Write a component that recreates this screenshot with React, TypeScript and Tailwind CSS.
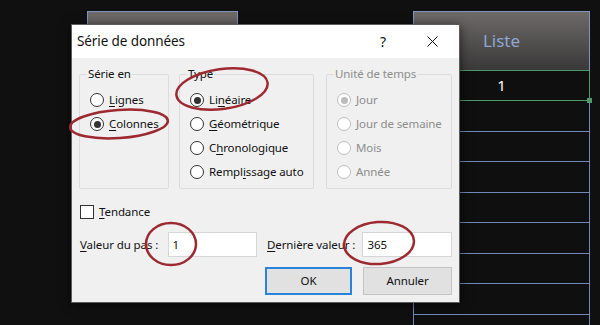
import type { ReactNode } from "react";

const font = { fontFamily: '"Noto Sans", "Open Sans", sans-serif' };

const rowHeights = [31, 30, 31, 30, 31, 30, 31, 31];

function Radio({
  label,
  checked = false,
  disabled = false,
}: {
  label: ReactNode;
  checked?: boolean;
  disabled?: boolean;
}) {
  return (
    <div className="flex h-[24px] items-center gap-[5px]">
      <span
        className={`flex h-[14px] w-[14px] items-center justify-center rounded-full border bg-white ${
          disabled ? "border-[#bcbcbc]" : "border-[#333]"
        }`}
      >
        {checked && (
          <span
            className={`h-[7px] w-[7px] rounded-full ${
              disabled ? "bg-[#bcbcbc]" : "bg-[#333]"
            }`}
          />
        )}
      </span>
      <span className={disabled ? "text-[#8d8d8d]" : "text-[#111]"}>{label}</span>
    </div>
  );
}

function U({ children }: { children: ReactNode }) {
  return <span className="underline decoration-1 underline-offset-2">{children}</span>;
}

function Group({
  title,
  width,
  disabled = false,
  children,
}: {
  title: string;
  width: string;
  disabled?: boolean;
  children: ReactNode;
}) {
  return (
    <fieldset
      className={`h-[123px] ${width} rounded-[2px] border border-[#dcdcdc] pl-[10px]`}
    >
      <legend
        className={`-ml-[3px] px-[1px] leading-[16px] ${
          disabled ? "text-[#8d8d8d]" : "text-[#111]"
        }`}
      >
        {title}
      </legend>
      <div className="pt-[6px]">{children}</div>
    </fieldset>
  );
}

export default function App() {
  return (
    <div
      className="relative h-[325px] w-[600px] overflow-hidden bg-[#101010]"
      style={font}
    >
      {/* sheet behind the dialog */}
      <div className="flex pl-[87px] pt-[11px]">
        <div className="h-[59px] w-[151px] border border-[#8194bd] bg-gradient-to-b from-[#6e6a6a] to-[#3e3c3c]" />
        <div className="ml-[175px] w-[177px]">
          <div className="flex h-[59px] items-center justify-center border border-b-0 border-[#8194bd] bg-gradient-to-b from-[#6e6a6a] to-[#3a3838] text-[17px] text-[#8ea6d2]">
            Liste
          </div>
          <div className="relative flex h-[31px] items-center justify-center border-[1.5px] border-[#4f9a6b] bg-[#0f0f0f] text-[15px] text-white">
            1
            <span className="absolute -bottom-[3px] -right-[3px] h-[5px] w-[5px] bg-[#4f9a6b]" />
          </div>
          {rowHeights.map((h, i) => (
            <div
              key={i}
              className="border-x border-b border-[#7089b8] bg-[#0f0f0f]"
              style={{ height: h }}
            />
          ))}
        </div>
      </div>

      {/* dialog */}
      <div className="absolute left-[71px] top-[24px] h-[279px] w-[389px] border border-[#5c5c5c] bg-[#f0f0f0] text-[11.5px] tracking-[-0.1px] shadow-[0_2px_10px_rgba(0,0,0,0.6)]">
        <div className="flex h-[33px] items-center bg-white pl-[5px] text-[13.5px] text-[#111]">
          <span>Série de données</span>
          <span className="ml-auto mr-[41px] text-[14px]">?</span>
          <svg width="11" height="11" viewBox="0 0 11 11" className="mr-[21px]">
            <path d="M0.5 0.5 L10.5 10.5 M10.5 0.5 L0.5 10.5" stroke="#111" strokeWidth="1" />
          </svg>
        </div>

        <div className="px-[7px]">
          <div className="mt-[8px] flex">
            <Group title="Série en" width="w-[91px]">
              <Radio label={<><U>L</U>ignes</>} />
              <Radio label={<><U>C</U>olonnes</>} checked />
            </Group>
            <div className="ml-[10px]">
              <Group title="Type" width="w-[135px]">
                <Radio label={<>Li<U>n</U>éaire</>} checked />
                <Radio label={<><U>G</U>éométrique</>} />
                <Radio label={<>C<U>h</U>ronologique</>} />
                <Radio label={<>Rempl<U>i</U>ssage auto</>} />
              </Group>
            </div>
            <div className="ml-[12px]">
              <Group title="Unité de temps" width="w-[126px]" disabled>
                <Radio label="Jour" checked disabled />
                <Radio label="Jour de semaine" disabled />
                <Radio label="Mois" disabled />
                <Radio label="Année" disabled />
              </Group>
            </div>
          </div>

          <div className="mt-[11px] flex h-[24px] items-center gap-[5px] pl-[1px]">
            <span className="h-[14px] w-[14px] border border-[#333] bg-white" />
            <span className="text-[#111]">
              <U>T</U>endance
            </span>
          </div>

          <div className="mt-[8px] flex h-[25px] items-center pl-[1px] text-[#111]">
            <span className="w-[88px]">
              <U>V</U>aleur du pas :
            </span>
            <div className="flex h-[25px] w-[90px] items-center border border-[#d6d6d6] bg-white pl-[4px]">
              1
            </div>
            <span className="ml-[10px] w-[96px]">
              <U>D</U>ernière valeur :
            </span>
            <div className="flex h-[25px] w-[90px] items-center border border-[#d6d6d6] bg-white pl-[4px]">
              365
            </div>
          </div>

          <div className="mt-[10px] flex justify-end gap-[11px] text-[#111]">
            <button
              type="button"
              className="h-[28px] w-[87px] border-2 border-[#2a82da] bg-[#e1e1e1]"
            >
              OK
            </button>
            <button
              type="button"
              className="h-[28px] w-[89px] border border-[#c4c4c4] bg-[#e1e1e1]"
            >
              Annuler
            </button>
          </div>
        </div>
      </div>

      {/* red annotation circles */}
      <svg
        className="pointer-events-none absolute inset-0"
        width="600"
        height="325"
        viewBox="0 0 600 325"
      >
        <g fill="none" stroke="#9c2a30" strokeWidth="2.5">
          <ellipse cx="119" cy="124" rx="49" ry="14" transform="rotate(-4 119 124)" />
          <ellipse cx="222" cy="89" rx="46" ry="20" transform="rotate(-8 222 89)" />
          <ellipse cx="171" cy="244" rx="25" ry="21" />
          <ellipse cx="379" cy="243" rx="35" ry="21" transform="rotate(-4 379 243)" />
        </g>
      </svg>
    </div>
  );
}
